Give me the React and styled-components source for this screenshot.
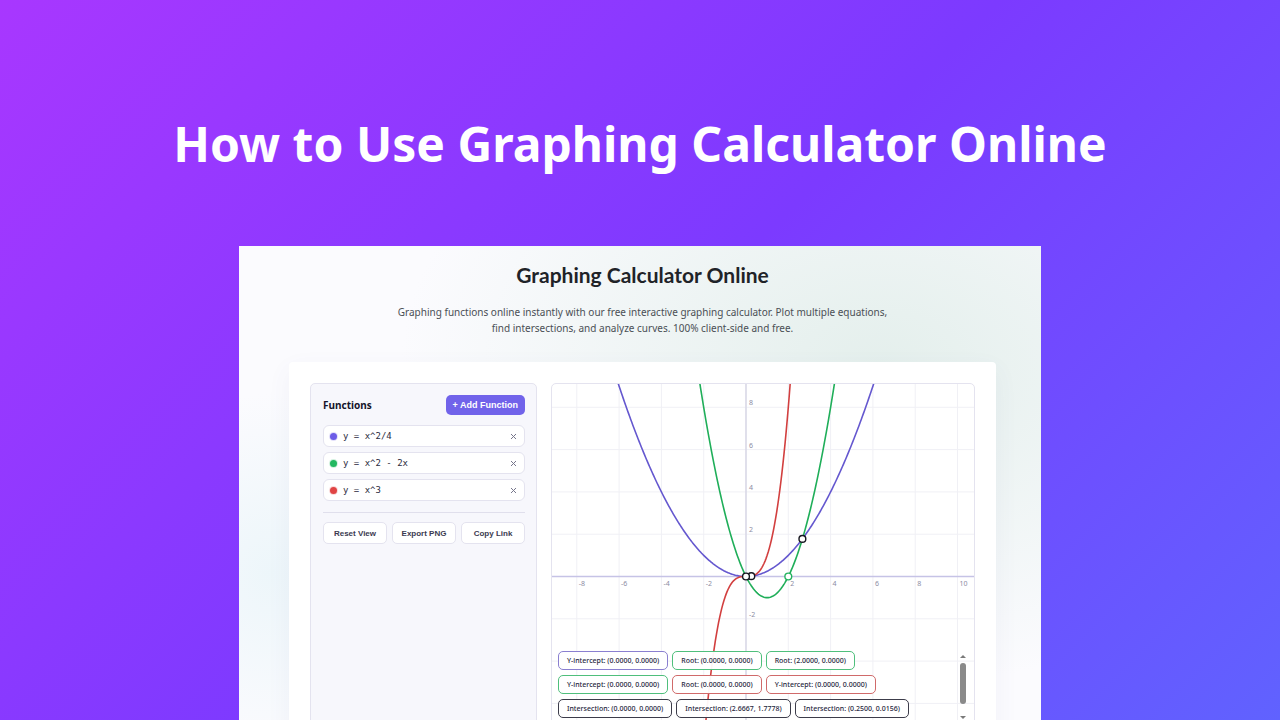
import React, { useState } from "react";
import styled, { createGlobalStyle } from "styled-components";

const GlobalStyle = createGlobalStyle`
  * {
    box-sizing: border-box;
  }
  body {
    margin: 0;
    font-family: "Noto Sans", "Open Sans", sans-serif;
  }
  h1, h2, h3, p {
    margin: 0;
  }
`;

const Page = styled.main`
  display: flex;
  flex-direction: column;
  align-items: center;
  height: 100vh;
  overflow: hidden;
  background: linear-gradient(135deg, #a837ff 0%, #7c3aff 50%, #6062ff 100%);
`;

const Hero = styled.header`
  padding: 110px 24px 68px;
`;

const HeroTitle = styled.h1`
  color: #ffffff;
  font-size: 48px;
  font-weight: 700;
  line-height: 68px;
  text-align: center;
  text-wrap: balance;
`;

const Sheet = styled.section`
  flex-shrink: 0;
  width: 100%;
  max-width: 802px;
  padding: 14px 45px 40px 50px;
  background:
    radial-gradient(ellipse 480px 320px at 80% 22%, #e4efec, rgba(228, 239, 236, 0) 100%),
    radial-gradient(ellipse 160px 180px at 4% 60%, #edf6fa, rgba(237, 246, 250, 0) 100%),
    #fbfbfe;
`;

const Intro = styled.div`
  display: flex;
  flex-direction: column;
  align-items: center;
  gap: 15px;
  padding-bottom: 26px;
  text-align: center;
`;

const IntroTitle = styled.h2`
  color: #1f2328;
  font-family: Lato, "Noto Sans", sans-serif;
  font-size: 21px;
  font-weight: 700;
  line-height: 29px;
`;

const IntroText = styled.p`
  max-width: 510px;
  color: #4a4f55;
  font-size: 10px;
  line-height: 16px;
`;

const Tool = styled.div`
  display: grid;
  grid-template-columns: 227px 1fr;
  gap: 14px;
  padding: 21px;
  border-radius: 4px;
  background: #ffffff;
  box-shadow: 0 8px 24px rgba(90, 90, 160, 0.06);
`;

const Panel = styled.div`
  padding: 11px 11px 11px 12px;
  border: 1px solid #e4e3ef;
  border-radius: 5px;
  background: #f7f7fc;
`;

const PanelHeader = styled.div`
  display: flex;
  align-items: center;
  justify-content: space-between;
  margin-bottom: 10px;
`;

const PanelTitle = styled.h3`
  color: #14142b;
  font-size: 10px;
  font-weight: 700;
`;

const AddButton = styled.button`
  height: 20px;
  padding: 0 7px;
  border: 0;
  border-radius: 5px;
  background: #7163ea;
  color: #ffffff;
  font: 700 9px "Liberation Sans", Arial, sans-serif;
`;

const FunctionList = styled.div`
  display: flex;
  flex-direction: column;
  gap: 5px;
  padding-bottom: 11px;
  border-bottom: 1px solid #e0dfec;
`;

const FunctionRow = styled.label`
  display: flex;
  align-items: center;
  gap: 6px;
  height: 22px;
  padding: 0 6px;
  border: 1px solid #e4e3ef;
  border-radius: 6px;
  background: #ffffff;
`;

const Dot = styled.span`
  width: 7px;
  height: 7px;
  border-radius: 50%;
  background: ${(props) => props.$color};
  box-shadow: 0 0 0 1px ${(props) => props.$color}33;
`;

const FunctionInput = styled.input`
  flex: 1;
  min-width: 0;
  padding: 0;
  border: 0;
  outline: 0;
  background: none;
  color: #2b2b40;
  font: 9px "DejaVu Sans Mono", monospace;
`;

const RemoveButton = styled.button`
  display: flex;
  padding: 1px;
  border: 0;
  background: none;
  color: #77778c;
`;

const Actions = styled.div`
  display: grid;
  grid-template-columns: repeat(3, 1fr);
  gap: 5px;
  padding-top: 9px;
`;

const ActionButton = styled.button`
  height: 22px;
  padding: 0;
  border: 1px solid #e4e3ef;
  border-radius: 5px;
  background: #ffffff;
  color: #3a3a50;
  font: 700 8px "Liberation Sans", Arial, sans-serif;
`;

const GraphBox = styled.div`
  position: relative;
  overflow: hidden;
  border: 1px solid #e4e3ef;
  border-radius: 5px;
  background: #ffffff;
`;

const GraphSvg = styled.svg`
  display: block;
  width: 100%;
  height: auto;
`;

const AxisLabel = styled.text`
  fill: #8c8ca3;
  font-family: "Noto Sans", sans-serif;
  font-size: 7px;
`;

const Overlay = styled.div`
  position: absolute;
  left: 6px;
  right: 6px;
  bottom: 6px;
  display: flex;
  height: 72px;
`;

const Chips = styled.div`
  display: flex;
  flex: 1;
  flex-wrap: wrap;
  align-content: flex-start;
  gap: 5px 4px;
  overflow: hidden;
`;

const Chip = styled.span`
  height: 19px;
  padding: 0 8px;
  border: 1px solid ${(props) => props.$color};
  border-radius: 5px;
  background: rgba(255, 255, 255, 0.95);
  color: #26263c;
  font-size: 7px;
  font-weight: 500;
  line-height: 17px;
  white-space: nowrap;
`;

const ScrollRail = styled.div`
  display: flex;
  flex-direction: column;
  align-items: center;
  gap: 5px;
  width: 10px;
  padding-top: 4px;
`;

const ScrollThumb = styled.div`
  width: 6px;
  height: 41px;
  margin-bottom: 7px;
  border-radius: 3px;
  background: #8a8a8a;
`;

const GREEN = "#22b35e";
const BLACK = "#16161f";

const functions = [
  { color: "#6c5ce7", text: "y = x^2/4", fn: (x) => (x * x) / 4, stroke: "#6558cf" },
  { color: "#22b860", text: "y = x^2 - 2x", fn: (x) => x * x - 2 * x, stroke: "#1fae59" },
  { color: "#e04444", text: "y = x^3", fn: (x) => x * x * x, stroke: "#d23f3f" },
];

const markers = [
  { x: 2, y: 0, color: GREEN },
  { x: 2.6667, y: 1.7778, color: BLACK },
  { x: 0.25, y: 0.0156, color: BLACK },
  { x: 0, y: 0, color: BLACK },
];

const points = [
  { label: "Y-intercept: (0.0000, 0.0000)", color: "#8a7fd0" },
  { label: "Root: (0.0000, 0.0000)", color: "#4fbf7c" },
  { label: "Root: (2.0000, 0.0000)", color: "#4fbf7c" },
  { label: "Y-intercept: (0.0000, 0.0000)", color: "#4fbf7c" },
  { label: "Root: (0.0000, 0.0000)", color: "#d06a6a" },
  { label: "Y-intercept: (0.0000, 0.0000)", color: "#d06a6a" },
  { label: "Intersection: (0.0000, 0.0000)", color: "#3c3c4a" },
  { label: "Intersection: (2.6667, 1.7778)", color: "#3c3c4a" },
  { label: "Intersection: (0.2500, 0.0156)", color: "#3c3c4a" },
];

// plot area, in svg units
const WIDTH = 422;
const HEIGHT = 345;
const ORIGIN_X = 194;
const ORIGIN_Y = 192.5;
const UNIT = 21.15;

const toX = (x) => ORIGIN_X + x * UNIT;
const toY = (y) => ORIGIN_Y - y * UNIT;

const curve = (fn) => {
  const coords = [];
  for (let x = -10; x <= 11; x += 0.05) {
    const y = toY(fn(x));
    if (y > -60 && y < HEIGHT + 60) {
      coords.push(`${toX(x).toFixed(2)},${y.toFixed(2)}`);
    }
  }
  return coords.join(" ");
};

const xTicks = [-8, -6, -4, -2, 2, 4, 6, 8, 10];
const yTicks = [8, 6, 4, 2, -2, -4, -6];
// the chips cover the axis below this value
const LOWEST_LABEL = -2;

const Graph = () => (
  <GraphSvg viewBox={`0 0 ${WIDTH} ${HEIGHT}`} role="img" aria-label="Graph of the functions">
    <g stroke="#f0f0f5" strokeWidth="1">
      {xTicks.map((t) => (
        <line key={t} x1={toX(t)} x2={toX(t)} y1="0" y2={HEIGHT} />
      ))}
      {yTicks.map((t) => (
        <line key={t} x1="0" x2={WIDTH} y1={toY(t)} y2={toY(t)} />
      ))}
    </g>
    <line x1="0" x2={WIDTH} y1={ORIGIN_Y} y2={ORIGIN_Y} stroke="#c6c3e6" strokeWidth="1.4" />
    <line x1={ORIGIN_X} x2={ORIGIN_X} y1="0" y2={HEIGHT} stroke="#d9d8e6" strokeWidth="1.6" />
    {xTicks.map((t) => (
      <AxisLabel key={t} x={toX(t) + 2} y={ORIGIN_Y + 9}>
        {t}
      </AxisLabel>
    ))}
    {yTicks
      .filter((t) => t >= LOWEST_LABEL)
      .map((t) => (
        <AxisLabel key={t} x={ORIGIN_X + 3} y={toY(t) - 2}>
          {t}
        </AxisLabel>
      ))}
    {functions.map((f) => (
      <polyline key={f.text} points={curve(f.fn)} fill="none" stroke={f.stroke} strokeWidth="1.6" />
    ))}
    {markers.map((m) => (
      <circle
        key={m.x}
        cx={toX(m.x)}
        cy={toY(m.y)}
        r="3.4"
        fill="#ffffff"
        stroke={m.color}
        strokeWidth="1.4"
      />
    ))}
  </GraphSvg>
);

const App = () => {
  const [values, setValues] = useState(functions.map((f) => f.text));

  const onChange = (index, value) => {
    setValues(values.map((v, i) => (i === index ? value : v)));
  };

  return (
    <>
      <GlobalStyle />
      <Page>
        <Hero>
          <HeroTitle>How to Use Graphing Calculator Online</HeroTitle>
        </Hero>
        <Sheet>
          <Intro>
            <IntroTitle>Graphing Calculator Online</IntroTitle>
            <IntroText>
              Graphing functions online instantly with our free interactive graphing calculator. Plot
              multiple equations, find intersections, and analyze curves. 100% client-side and free.
            </IntroText>
          </Intro>
          <Tool>
            <Panel>
              <PanelHeader>
                <PanelTitle>Functions</PanelTitle>
                <AddButton type="button">+ Add Function</AddButton>
              </PanelHeader>
              <FunctionList>
                {functions.map((f, i) => (
                  <FunctionRow key={f.text}>
                    <Dot $color={f.color} />
                    <FunctionInput
                      aria-label={`Function ${i + 1}`}
                      value={values[i]}
                      onChange={(e) => onChange(i, e.target.value)}
                    />
                    <RemoveButton type="button" aria-label="Remove function">
                      <svg width="7" height="7" viewBox="0 0 7 7" stroke="currentColor" strokeWidth="1">
                        <path d="M1 1l5 5M6 1L1 6" />
                      </svg>
                    </RemoveButton>
                  </FunctionRow>
                ))}
              </FunctionList>
              <Actions>
                <ActionButton type="button">Reset View</ActionButton>
                <ActionButton type="button">Export PNG</ActionButton>
                <ActionButton type="button">Copy Link</ActionButton>
              </Actions>
            </Panel>
            <GraphBox>
              <Graph />
              <Overlay>
                <Chips>
                  {points.map((p, i) => (
                    <Chip key={i} $color={p.color}>
                      {p.label}
                    </Chip>
                  ))}
                </Chips>
                <ScrollRail aria-hidden="true">
                  <svg width="6" height="3" viewBox="0 0 6 3" fill="#7a7a7a">
                    <path d="M3 0l3 3H0z" />
                  </svg>
                  <ScrollThumb />
                  <svg width="6" height="3" viewBox="0 0 6 3" fill="#7a7a7a">
                    <path d="M3 3L0 0h6z" />
                  </svg>
                </ScrollRail>
              </Overlay>
            </GraphBox>
          </Tool>
        </Sheet>
      </Page>
    </>
  );
};

export default App;
